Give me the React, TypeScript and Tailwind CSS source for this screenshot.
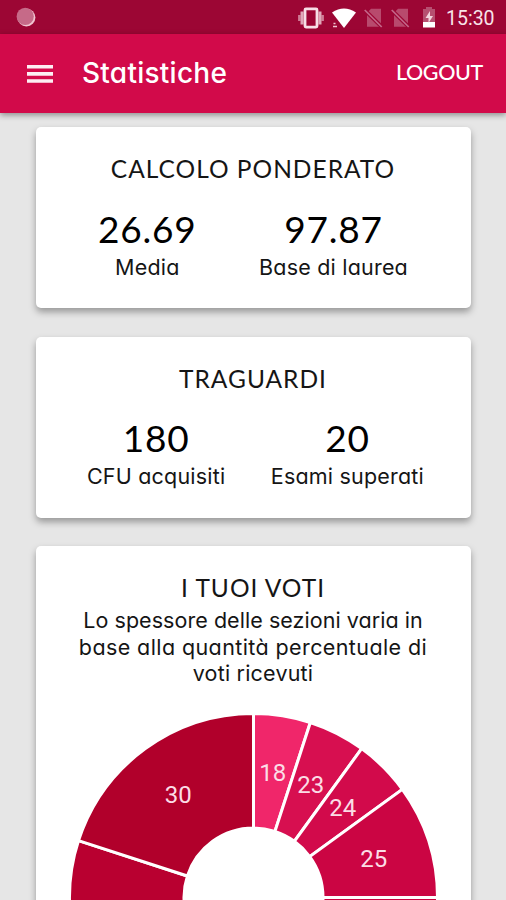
import type { ReactNode } from 'react';

const CX = 217.5;
const CY = 198.5;
const OUTER = 184;
const INNER = 69.5;

const slices = [
    { label: '18', from: 0, to: 18, color: '#f0266a' },
    { label: '23', from: 18, to: 36, color: '#d70f50' },
    { label: '24', from: 36, to: 54, color: '#d20a4b' },
    { label: '25', from: 54, to: 90, color: '#cb0543' },
    { label: '', from: 90, to: 180, color: '#c80340' },
    { label: '', from: 180, to: 288, color: '#b90030' },
    { label: '30', from: 288, to: 360, color: '#b1002b' },
];

function point(radius: number, angle: number) {
    const rad = (angle * Math.PI) / 180;
    return `${CX + radius * Math.sin(rad)} ${CY - radius * Math.cos(rad)}`;
}

function slicePath(from: number, to: number) {
    return `M${point(OUTER, from)} A${OUTER} ${OUTER} 0 0 1 ${point(OUTER, to)} L${point(INNER, to)} A${INNER} ${INNER} 0 0 0 ${point(INNER, from)} Z`;
}

function labelPosition(from: number, to: number) {
    const rad = (((from + to) / 2) * Math.PI) / 180;
    return { x: CX - 0.5 + 127 * Math.sin(rad), y: CY - 127 * Math.cos(rad) + 8.5 };
}

function StatusBar() {
    return (
        <div className="flex h-[34px] items-center bg-[#9c0634] pr-[11px] pl-4 text-white">
            <svg width="20" height="20" viewBox="0 0 20 20">
                <circle cx="10.4" cy="10.5" r="9" fill="#f0c4d0" />
                <circle cx="9.2" cy="9.4" r="8.6" fill="#c66a88" />
            </svg>
            <div className="mt-px ml-auto flex items-center">
                <svg width="26" height="22" viewBox="0 0 26 22" fill="none" stroke="#f7dfe6">
                    <rect x="7" y="1.9" width="12" height="18.2" rx="1" strokeWidth="2.8" />
                    <path d="M4 4.500v13M22 4.500v13" strokeWidth="3" opacity=".75" />
                    <path d="M1.300 8v6M24.700 8v6" strokeWidth="2.400" opacity=".55" />
                </svg>
                <svg className="ml-[7px]" width="26" height="20" viewBox="0 0 26 20">
                    <path d="M1 4.500Q13-3.500 25 4.500L13 20Z" fill="#fff" />
                    <path d="M2.500 15.500h2M2 18.500h4" stroke="#f0c4d0" strokeWidth="1.500" />
                </svg>
                <NoSim className="ml-[7px]" />
                <NoSim className="ml-[8px]" />
                <svg className="ml-[12px]" width="14" height="21" viewBox="0 0 14 21">
                    <path d="M4 0h6v2h3v14H1V2h3Z" fill="#b64f70" />
                    <path d="M1 15h12v5.500H1Z" fill="#fff" />
                    <path d="M8 4 3.500 11H6.500v5L11 9H8Z" fill="#f3d5de" />
                </svg>
                <span className="mt-[3px] ml-[10px] w-[49px] font-[Roboto] text-[19.5px] leading-none whitespace-nowrap text-[#f8e3e9]">
                    15:30
                </span>
            </div>
        </div>
    );
}

function NoSim({ className }: { className: string }) {
    return (
        <svg className={className} width="19" height="20" viewBox="0 0 19 20">
            <path d="M7 .8h10v18H3V5Z" fill="#b84a6d" />
            <path d="M1 2.500 18 19" stroke="#9c0634" strokeWidth="4" />
            <path d="M.7 2 17.700 19" stroke="#c4688a" strokeWidth="1.700" />
        </svg>
    );
}

function AppBar() {
    return (
        <header className="relative flex h-[78.500px] items-center bg-[#d20a4a] px-[27px] text-white shadow-[0_2px_6px_rgba(0,0,0,0.4)]">
            <svg className="mt-px" width="26" height="20" viewBox="0 0 26 20" stroke="#fdeef3" strokeWidth="3.600">
                <path d="M0 2.800h26M0 9.900h26M0 17h26" />
            </svg>
            <h1 className="ml-[29px] font-[Inter] text-[28px] font-medium tracking-[0.250px] [font-feature-settings:'cv11']">
                Statistiche
            </h1>
            <button className="mr-[-4px] mb-[2px] ml-auto font-[Lato] text-[21.500px] font-medium tracking-[-0.350px]">
                LOGOUT
            </button>
        </header>
    );
}

function Card({ title, children }: { title: string; children: ReactNode }) {
    return (
        <section className="h-[181px] shrink-0 rounded-[5px] bg-white pt-[26px] text-center text-[#151515] shadow-[0_4px_7px_rgba(0,0,0,0.34)] last:h-[420px]">
            <h2 className="font-[Lato] text-[24.5px] leading-[32px] tracking-[1px]">{title}</h2>
            {children}
        </section>
    );
}

function Stat({ value, label }: { value: string; label: string }) {
    return (
        <div>
            <div className="font-[Lato] text-[37px] leading-[44px] tracking-[0.800px] text-black">{value}</div>
            <div className="mt-px font-[Inter] text-[21.5px] leading-[30px] tracking-[0.200px] [font-feature-settings:'cv11']">
                {label}
            </div>
        </div>
    );
}

export default function App() {
    return (
        <div className="h-[900px] w-[506px] overflow-hidden bg-[#e6e6e6]">
            <StatusBar />
            <AppBar />
            <main className="flex flex-col gap-[28.500px] px-[35.500px] pt-[14.500px]">
                <Card title="CALCOLO PONDERATO">
                    <div className="mt-[21.500px] flex justify-evenly">
                        <Stat value="26.69" label="Media" />
                        <Stat value="97.87" label="Base di laurea" />
                    </div>
                </Card>
                <Card title="TRAGUARDI">
                    <div className="mt-[21px] flex justify-evenly pr-px pl-[6px]">
                        <Stat value="180" label="CFU acquisiti" />
                        <Stat value="20" label="Esami superati" />
                    </div>
                </Card>
                <Card title="I TUOI VOTI">
                    <p className="mt-[3px] font-[Inter] text-[21.5px] leading-[26.500px] [font-feature-settings:'cv11']">
                        <span className="block tracking-[0.050px]">Lo spessore delle sezioni varia in</span>
                        <span className="block tracking-[0.400px]">base alla quantità percentuale di</span>
                        <span className="block tracking-[0.200px]">voti ricevuti</span>
                    </p>
                    <svg className="mt-[12px]" width="435" height="400" viewBox="0 0 435 400">
                        {slices.map((s) => (
                            <g key={s.from}>
                                <path d={slicePath(s.from, s.to)} fill={s.color} stroke="#fff" strokeWidth="3" />
                                {s.label && (
                                    <text
                                        {...labelPosition(s.from, s.to)}
                                        fill="#fbdde6"
                                        textAnchor="middle"
                                        className="font-[Roboto] text-[24px]"
                                    >
                                        {s.label}
                                    </text>
                                )}
                            </g>
                        ))}
                    </svg>
                </Card>
            </main>
        </div>
    );
}
